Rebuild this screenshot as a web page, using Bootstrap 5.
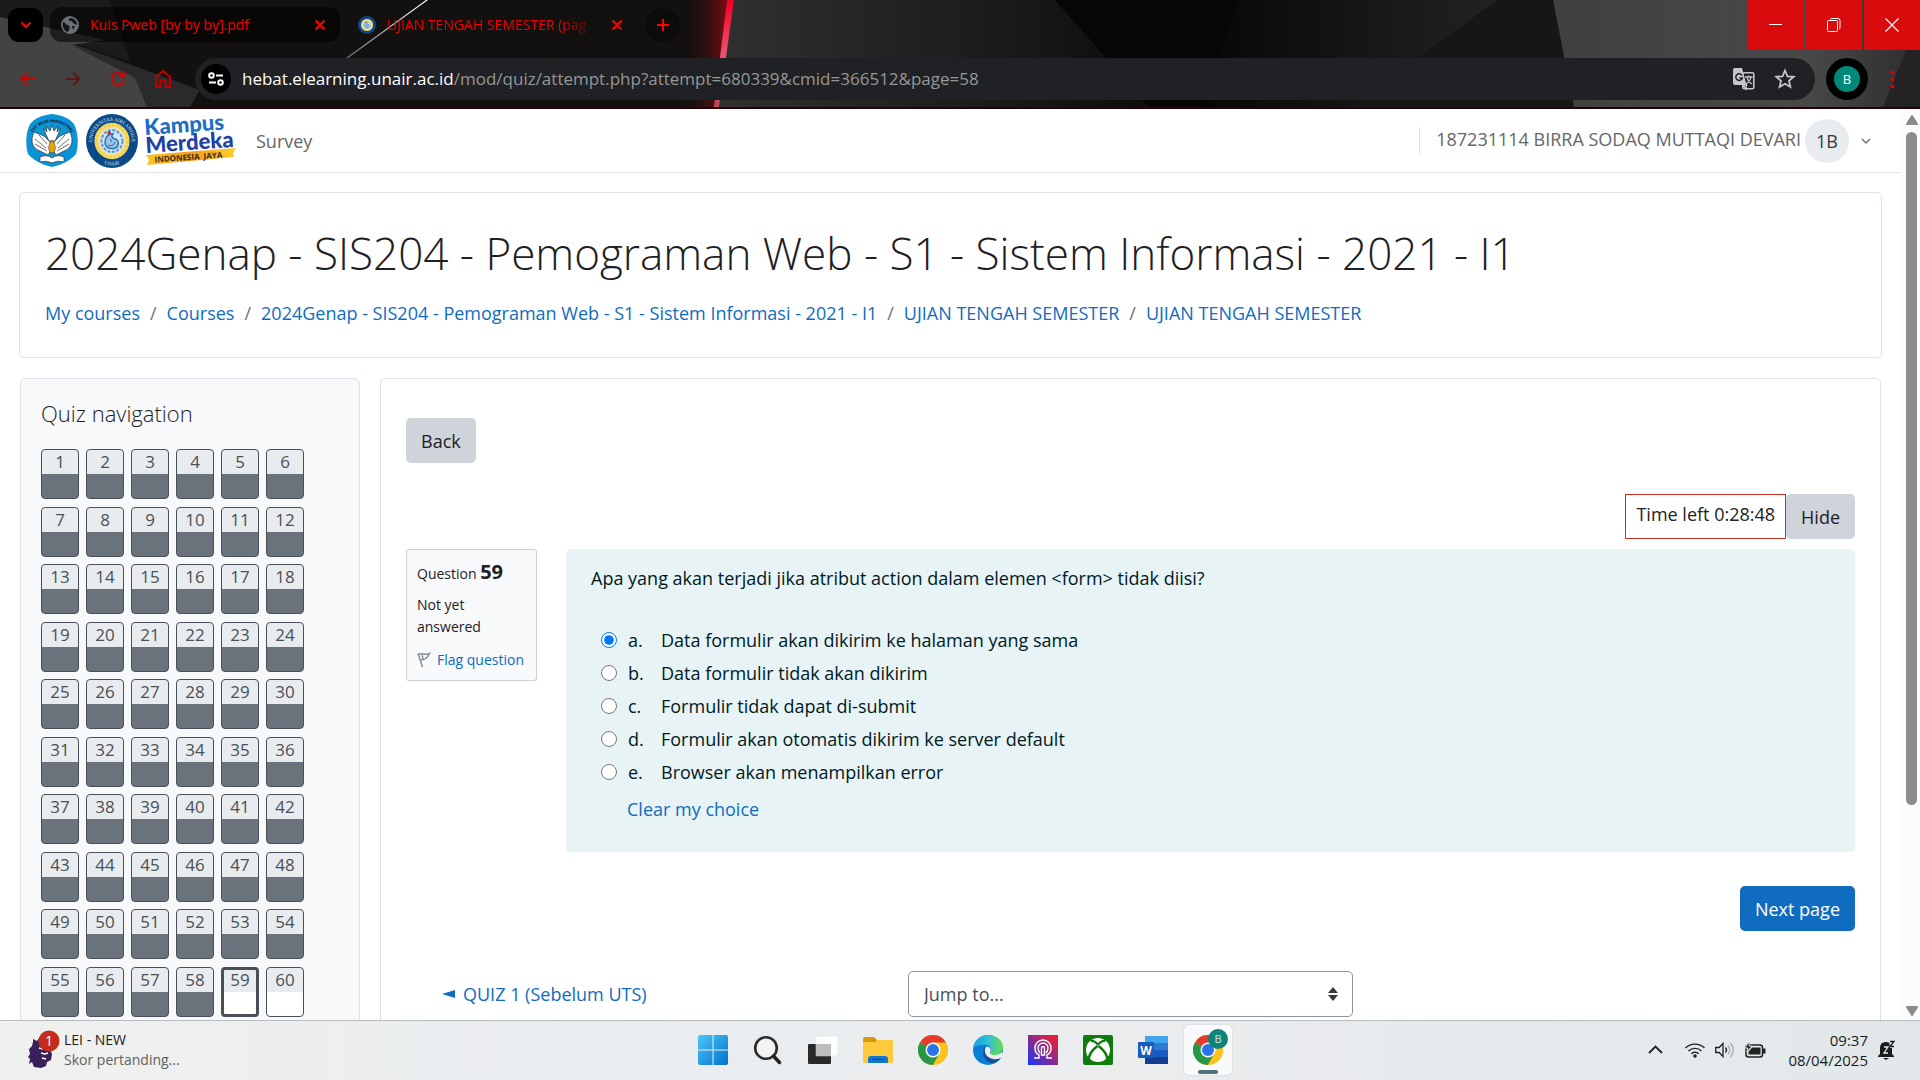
<!DOCTYPE html>
<html lang="id">
<head>
<meta charset="utf-8">
<meta name="viewport" content="width=device-width, initial-scale=1">
<title>UJIAN TENGAH SEMESTER (page 59 of 60)</title>
<link href="https://cdn.jsdelivr.net/npm/bootstrap@5.3.0/dist/css/bootstrap.min.css" rel="stylesheet">
<style>
  :root { --link: #0f6cbf; --line: #dee2e6; --red: #f00000; }
  body { font-family: "Open Sans", "Noto Sans", sans-serif; font-size: 18px; line-height: 28px; color: #1d2125; background: #fff; }
  a { color: var(--link); text-decoration: none; }
  svg { display: block; flex: none; overflow: visible; }
  button { font-family: inherit; }

  /* browser frame */
  .frame-top { position: relative; background: #12110f; border-bottom: 2px solid #2b0000; overflow: hidden; }
  .wallpaper { position: absolute; inset: 0; width: 100%; height: 100%; }
  .frame-row { position: relative; }
  .plain-btn { background: none; border: 0; padding: 0; display: flex; align-items: center; justify-content: center; flex: none; }
  .tab-strip { height: 58px; padding-left: 8px; }
  .tab-search { width: 35px; height: 34px; border-radius: 11px; background: #000; margin-top: 8px; }
  .tab-item { width: 290px; height: 35px; margin: 7px 0 0 7px; padding: 0 12px 0 11px; border-radius: 12px; color: var(--red); font-size: 14px; line-height: 20px; }
  .tab-idle { background: rgba(0, 0, 0, .55); }
  .tab-text { flex: 1; min-width: 0; margin-left: 11px; white-space: nowrap; }
  .tab-fade { -webkit-mask-image: linear-gradient(90deg, #000 78%, transparent 95%); mask-image: linear-gradient(90deg, #000 78%, transparent 95%); }
  .tab-new { width: 35px; height: 34px; border-radius: 50%; background: #0b0b0a; margin: 8px 0 0 8px; }
  .win-btns { gap: 2px; }
  .win-btn { width: 56px; height: 50px; background: #d90b0d; }
  .tool-row { height: 49px; padding: 0 25px 0 20px; }
  .tool-btn { width: 45px; height: 42px; justify-content: flex-start; }
  .address { height: 42px; border-radius: 21px; background: #202124; padding: 0 20px 0 6px; margin-left: -5px; }
  .site-dot { width: 30px; height: 30px; border-radius: 50%; background: #000; }
  .address-input { font-size: 17px; line-height: 24px; color: #969798; margin-left: 11px; }
  .address-host { color: #fff; }
  .me-ring { width: 42px; height: 42px; border-radius: 50%; background: #000; margin-left: 11px; }
  .me-dot { width: 26px; height: 26px; border-radius: 50%; background: #00897b; color: #fff; font-size: 13px; line-height: 26px; text-align: center; }
  .kebab-btn { height: 42px; margin-left: 22px; }

  /* page */
  .site-nav { height: 64px; border-bottom: 1px solid var(--line); padding: 0 29px 0 26px; }
  .site-nav a, .user-name { color: #646668; }
  .user-zone { border-left: 1px solid var(--line); height: 27px; padding-left: 16px; }
  .initials { width: 44px; height: 44px; border-radius: 50%; background: #e9ecef; color: #343a40; line-height: 44px; text-align: center; }
  .panel { border: 1px solid var(--line); border-radius: 5px; background: #fff; }
  .course-head { margin: 19px 18px 20px 19px; padding: 32px 25px 30px; }
  .course-title { font-size: 44px; font-weight: 300; line-height: 56px; margin: 0 0 18px; }
  .crumbs { --bs-breadcrumb-item-padding-x: 10px; --bs-breadcrumb-divider-color: #6a737b; }
  .lower { padding: 0 19px 0 20px; gap: 20px; }
  .quiz-side { width: 340px; flex: none; background: #f8f9fa; padding: 20px; }
  .side-title { font-size: 22px; font-weight: 300; line-height: 28px; margin: 0 0 22px; }
  .q-grid { display: grid; grid-template-columns: repeat(6, 38px); gap: 7px; align-content: space-between; min-height: 568px; }
  .q-box { height: 50px; border: 1px solid #495057; border-radius: 4px; overflow: hidden; text-align: center; font-size: 17px; line-height: 24px; color: #495057; background: linear-gradient(#e9ecef 24px, #6a737b 24px); }
  .q-open { background: linear-gradient(#e9ecef 24px, #fff 24px); }
  .q-here { border-width: 3px; line-height: 20px; background: linear-gradient(#e9ecef 22px, #fff 22px); }
  .quiz-main { padding: 39px 25px 40px; }
  .grey-btn, .blue-btn { border: 0; border-radius: 5px; padding: 9px 15px 8px; line-height: 28px; background: #ced4da; color: #1d2125; }
  .blue-btn { background: var(--link); color: #fff; }
  .timer-row { margin-top: 31px; margin-bottom: 10px; }
  .timer-box { border: 1px solid #ca3120; padding: 5px 10px 10px; }
  .q-info { width: 131px; flex: none; border: 1px solid #cad0d7; border-radius: 3px; background: #f8f9fa; padding: 8px 10px 9px; font-size: 14px; line-height: 22px; }
  .q-label { font-size: 14px; line-height: 28px; margin: 0 0 6px; font-weight: 400; white-space: nowrap; }
  .q-label b { font-size: 20px; }
  .flag-link { margin-top: 11px; gap: 6px; white-space: nowrap; }
  .q-body { flex: 1; margin-left: 29px; border-radius: 5px; background: #e7f3f5; color: #001a1e; padding: 15px 25px 29px; }
  .q-text { margin-bottom: 34px; }
  .answers { gap: 5px; padding-left: 10px; }
  .answers input { width: 16px; height: 16px; margin: 0 11px 0 0; }
  .answers .letter { width: 33px; }
  .clear-link { margin: 9px 0 0 36px; }
  .next-row { margin: 34px 0 40px; }
  .prev-col { padding-left: 36px; }
  .jump-col { padding: 0 19px; }
  .jump-box { position: relative; }
  .jump-select { appearance: none; width: 100%; height: 46px; border: 1px solid #8f959e; border-radius: 5px; padding: 0 15px; color: #495057; background: #fff; }
  .jump-mark { position: absolute; right: 15px; top: 16px; pointer-events: none; }
  .scroll-track { width: 20px; flex: none; background: #fcfcfc; padding: 6px 4px 4px 6px; }
  .scroll-thumb { width: 11px; height: 673px; border-radius: 6px; background: #8b8b8b; margin-top: 7px; }

  /* taskbar */
  .task-bar { display: grid; grid-template-columns: 1fr auto 1fr; align-items: center; height: 60px; padding-bottom: 2px; flex: none; border-top: 1px solid #b9bcbe; background: linear-gradient(90deg, #f0f0ee, #e9edf1 35%, #ecedee 50%, #e7eaed 75%, #e2e8e9); font-size: 14px; line-height: 20px; color: #1b1b1b; }
  .task-bar .sub { color: #5e5f60; }
  .widget { padding-left: 27px; gap: 4px; }
  .app-row { gap: 7px; }
  .app-btn { width: 48px; height: 50px; border-radius: 5px; }
  .app-on { background: #f9fafb; outline: 1px solid #dfe2e4; position: relative; }
  .app-on::after { content: ""; position: absolute; left: 14px; bottom: 1px; width: 20px; height: 4px; border-radius: 2px; background: #4f7480; }
  .tray { padding-right: 25px; gap: 10px; font-size: 15px; }
</style>
</head>
<body>
<svg width="0" height="0" class="position-absolute" aria-hidden="true">
  <defs>
    <symbol id="chrome" viewBox="0 0 30 30">
      <circle cx="15" cy="15" r="15" fill="#fbbc05"/>
      <path d="M15 15 2 7.500A15 15 0 0 1 28 7.500Z" fill="#e33b2e"/>
      <path d="M2 7.500A15 15 0 0 0 15 30L21.500 18.700 15 15Z" fill="#279847"/>
      <path d="M15 7.500H28A15 15 0 0 1 15 30L21.500 18.700Z" fill="#fcc31e"/>
      <circle cx="15" cy="15" r="7.500" fill="#fff"/><circle cx="15" cy="15" r="6" fill="#2a72ea"/>
    </symbol>
    <symbol id="unair" viewBox="0 0 52 52">
      <circle cx="26" cy="26" r="26" fill="#0b4a86"/>
      <circle cx="26" cy="26" r="17.500" fill="#f4e28a"/>
      <circle cx="26" cy="26" r="15.500" fill="none" stroke="#f7cf3c" stroke-width="3" stroke-dasharray="3 1"/>
      <circle cx="26" cy="26" r="12.500" fill="#d3e4f2"/>
      <circle cx="26" cy="26" r="10.500" fill="none" stroke="#5b97cc" stroke-width="2" stroke-dasharray="3 1.500"/>
      <path d="M19 27c0-5 4-8 8-8-2 3-1 4 2 5 3 1 4 3 3 6s-5 4-8 3c-3 0-5-3-5-6Z" fill="#9cc4e4" stroke="#2873b8" stroke-width="1.500"/>
      <path d="M22 30c3 1 6 0 7-3M24 24l2 3" stroke="#2873b8" fill="none"/>
      <path d="m21 18 3-2 1 3-3 1Z" fill="#d22"/>
    </symbol>
  </defs>
</svg>

<div class="vh-100 d-flex flex-column overflow-hidden">
  <header class="frame-top flex-shrink-0">
    <svg class="wallpaper" viewBox="0 0 1920 107" preserveAspectRatio="none" aria-hidden="true">
      <defs>
        <linearGradient id="ga" x2="1"><stop stop-color="#303030"/><stop offset=".6" stop-color="#1c1c1c"/><stop offset="1" stop-color="#0c0c0c"/></linearGradient>
        <linearGradient id="gb" x2="1"><stop stop-color="#404040"/><stop offset=".7" stop-color="#484848"/><stop offset="1" stop-color="#2d2d2d"/></linearGradient>
        <linearGradient id="gc" x2="1"><stop stop-color="#12110f" stop-opacity="0"/><stop offset="1" stop-color="#7a0c16"/></linearGradient>
        <linearGradient id="gd" x2="0" y2="1"><stop stop-color="#f00020"/><stop offset=".5" stop-color="#f05070"/><stop offset="1" stop-color="#c44458"/></linearGradient>
        <linearGradient id="ge" x2="1"><stop stop-color="#070707"/><stop offset="1" stop-color="#222"/></linearGradient>
        <linearGradient id="gf" x2="0" y2="1"><stop stop-color="#fff"/><stop offset="1" stop-color="#777"/></linearGradient>
      </defs>
      <path d="M0 0H110L130 62 0 17Z" fill="#1b1b1b"/>
      <path d="M0 17 200 90 190 107H0Z" fill="#2a2a2a"/>
      <path d="M0 17 105 40 72 45 135 78 147 107H0Z" fill="#434343"/>
      <path d="M690 0H727L715 107H680Z" fill="url(#gc)"/>
      <path d="M733 0H1055L1150 107H719Z" fill="url(#ga)"/>
      <path d="M1055 0H1280L1240 107H1150Z" fill="#070604"/>
      <path d="M1240 0H1498L1350 107H1200Z" fill="url(#ge)"/>
      <path d="M1498 0H1553L1574 107H1350Z" fill="#161616"/>
      <path d="M1553 0H1920V107H1574Z" fill="url(#gb)"/>
      <path d="M1906 50H1920V107H1883Z" fill="#232323"/>
      <path d="M727 0h7L719 107h-5Z" fill="url(#gd)"/>
      <path d="M426 0h2L348 58h-2Z" fill="url(#gf)"/>
    </svg>
    <div class="frame-row tab-strip d-flex align-items-start">
      <button class="plain-btn tab-search" aria-label="Cari tab"><svg width="12" height="8" viewBox="0 0 12 8"><path d="m1.500 1.500 4.500 4.500 4.500-4.500" fill="none" stroke="red" stroke-width="2"/></svg></button>
      <div class="tab-item tab-idle d-flex align-items-center">
        <svg width="18" height="18" viewBox="0 0 18 18"><circle cx="9" cy="9" r="9" fill="#6b7075"/><path d="M2 6c3 0 2 3 5 3 2 1 2 3 1 5l-1 2C3 15 1 11 2 6ZM9 2c-2 2-2 3 1 3 3 1 2 3 4 3l2 1c0-4-3-7-7-7ZM11 10h3l-2 4Z" fill="#151515"/></svg>
        <span class="tab-text">Kuis Pweb [by by by].pdf</span>
        <button class="plain-btn" aria-label="Tutup tab"><svg width="16" height="16" viewBox="0 0 16 16"><path d="m3.500 3.500 9 9m0-9-9 9" stroke="red" stroke-width="2"/></svg></button>
      </div>
      <div class="tab-item d-flex align-items-center">
        <svg width="18" height="18"><use href="#unair"/></svg>
        <span class="tab-text tab-fade">UJIAN TENGAH SEMESTER (pag</span>
        <button class="plain-btn" aria-label="Tutup tab"><svg width="16" height="16" viewBox="0 0 16 16"><path d="m3.500 3.500 9 9m0-9-9 9" stroke="red" stroke-width="2"/></svg></button>
      </div>
      <button class="plain-btn tab-new" aria-label="Tab baru"><svg width="14" height="14" viewBox="0 0 14 14"><path d="M7 1v12M1 7h12" stroke="red" stroke-width="2"/></svg></button>
      <div class="win-btns d-flex ms-auto">
        <button class="plain-btn win-btn" aria-label="Kecilkan"><svg width="14" height="14" viewBox="0 0 14 14"><path d="M0 6.500h13" stroke="#fff"/></svg></button>
        <button class="plain-btn win-btn" aria-label="Pulihkan"><svg width="14" height="14" viewBox="0 0 14 14"><path d="M3.500 1.500q0-1 1-1H11q2 0 2 2V10q0 1-1 1" fill="none" stroke="#fff"/><rect x=".5" y="2.500" width="10" height="11" rx="1" fill="none" stroke="#fff"/></svg></button>
        <button class="plain-btn win-btn" aria-label="Tutup"><svg width="14" height="14" viewBox="0 0 14 14"><path d="m.5.5 13 13m0-13-13 13" stroke="#fff" stroke-width="1.200"/></svg></button>
      </div>
    </div>
    <div class="frame-row tool-row d-flex align-items-start">
      <button class="plain-btn tool-btn" aria-label="Kembali"><svg width="16" height="16" viewBox="0 0 16 16"><path d="M15 8H2m6-6.500L1.500 8 8 14.500" fill="none" stroke="#d00000" stroke-width="2"/></svg></button>
      <button class="plain-btn tool-btn" aria-label="Maju"><svg width="16" height="16" viewBox="0 0 16 16"><path d="M1 8h13M8 1.500 14.500 8 8 14.500" fill="none" stroke="#5c1818" stroke-width="2"/></svg></button>
      <button class="plain-btn tool-btn" aria-label="Muat ulang"><svg width="16" height="16" viewBox="0 0 16 16"><path d="M13.500 5A6.300 6.300 0 1 0 14.200 9.500M14 .5V6H8.500" fill="none" stroke="#d00000" stroke-width="2"/></svg></button>
      <button class="plain-btn tool-btn" aria-label="Beranda"><svg width="16" height="18" viewBox="0 0 16 18"><path d="M1 7 8 1l7 6v10h-4.500v-6.500h-5V17H1Z" fill="none" stroke="#c00000" stroke-width="2"/></svg></button>
      <div class="address flex-grow-1 d-flex align-items-center">
        <button class="plain-btn site-dot" aria-label="Info situs"><svg width="16" height="14" viewBox="0 0 16 14"><g fill="none" stroke="#fff" stroke-width="2"><circle cx="3.500" cy="3.500" r="2.300"/><path d="M8 3.500h7M1 10.500h7"/><circle cx="12.500" cy="10.500" r="2.300"/></g></svg></button>
        <a class="address-input flex-grow-1" href="#"><span class="address-host">hebat.elearning.unair.ac.id</span>/mod/quiz/attempt.php?attempt=680339&amp;cmid=366512&amp;page=58</a>
        <button class="plain-btn me-3" aria-label="Terjemahkan"><svg width="22" height="22" viewBox="0 0 22 22"><rect x="9.800" y="4.800" width="11" height="16" rx="1.500" fill="none" stroke="#c4c6c8" stroke-width="1.600"/><path d="M2 0h7l4.500 17H2q-2 0-2-2V2q0-2 2-2Z" fill="#c4c6c8"/><path d="M9 7.500A3.300 3.300 0 1 0 9.300 10H6.500" fill="none" stroke="#202124" stroke-width="1.500"/><path d="M12 9h7.500M15.500 7.500V9m2.500 0c-.5 3-3 5.500-5 7m1-6c1 3 3 5 5 6M10 17l3 4 .5-4Z" fill="none" stroke="#c4c6c8" stroke-width="1.300"/></svg></button>
        <button class="plain-btn ms-1" aria-label="Tandai halaman"><svg width="20" height="20" viewBox="0 0 20 20"><path d="m10 1.500 2.500 5.800 6.200.5-4.700 4.100 1.400 6.100L10 14.800 4.600 18 6 11.900 1.300 7.800l6.200-.5Z" fill="none" stroke="#c4c6c8" stroke-width="1.800"/></svg></button>
      </div>
      <button class="plain-btn me-ring" aria-label="Profil"><span class="me-dot">B</span></button>
      <button class="plain-btn kebab-btn" aria-label="Menu"><svg width="5" height="19" viewBox="0 0 5 19"><g fill="#d80000"><circle cx="2.500" cy="2.500" r="2"/><circle cx="2.500" cy="9.500" r="2"/><circle cx="2.500" cy="16.500" r="2"/></g></svg></button>
    </div>
  </header>

  <div class="d-flex flex-grow-1 overflow-hidden">
    <div class="flex-grow-1 overflow-hidden">
      <nav class="site-nav d-flex align-items-center">
        <a href="#" class="d-flex align-items-center gap-2" aria-label="Beranda situs">
          <svg width="52" height="54" viewBox="0 0 52 54">
            <path d="M26 0C36 1 43 4 48 10c4 8 5 20 2 30-5 6-14 11-24 13C16 51 7 46 2 40-1 30 0 18 4 10 9 4 16 1 26 0Z" fill="#0a93d6"/>
            <path id="arc1" d="M6 21C11 4 41 4 46 21" fill="none"/>
            <text font-size="4" font-weight="700" fill="#111"><textPath href="#arc1" startOffset="50%" text-anchor="middle">TUT WURI HANDAYANI</textPath></text>
            <g fill="#fff" stroke="#333" stroke-width=".7">
              <path d="M23 27 17 14l4 4-1-6 4 5 2-6 2 6 4-5-1 6 4-4-6 13Z"/>
              <path d="M24 28 18 22 8 18C4 27 6 34 14 37l8 4 3-5Zm4 0 6-6 10-4c4 9 2 16-6 19l-8 4-3-5Z"/>
              <path d="M9 25l11 9M9 30l12 7M43 25l-11 9M43 30l-12 7M13 21l8 9M39 21l-8 9"/>
              <path d="M14 43q7-3 12 1 5-4 12-1v5q-7-2-12 1-5-3-12-1Z"/>
            </g>
            <path d="M26 26c5 6 4 12 0 13-4-1-5-7 0-13Z" fill="#e8a30c" stroke="#333" stroke-width=".5"/>
          </svg>
          <svg width="52" height="54" viewBox="0 0 52 52" preserveAspectRatio="none">
            <use href="#unair" width="52" height="52"/>
            <path id="arc2" d="M7 33A20 20 0 1 1 45 33" fill="none"/><path id="arc3" d="M9 42A23 23 0 0 0 43 42" fill="none"/>
            <text font-size="5" font-family="Liberation Serif" fill="#dfe9f2"><textPath href="#arc2" startOffset="50%" text-anchor="middle">UNIVERSITAS AIRLANGGA</textPath></text>
            <text font-size="5" font-family="Liberation Serif" fill="#dfe9f2"><textPath href="#arc3" startOffset="50%" text-anchor="middle">UNAIR</textPath></text>
          </svg>
          <svg width="90" height="50" viewBox="0 0 90 50">
            <defs><linearGradient id="gj" x2="1"><stop stop-color="#fbc623"/><stop offset=".5" stop-color="#f59b20"/><stop offset="1" stop-color="#fbd02a"/></linearGradient></defs>
            <path d="M0 39 90 32 87 37 88 41 1 49 3 44Z" fill="url(#gj)"/>
            <g transform="rotate(-4 0 36)">
              <text x="0" y="19" font-family="Lato" font-weight="900" font-size="22" fill="#1c6fc4">Kampus</text>
              <text x="0" y="37" font-family="Lato" font-weight="900" font-size="22" fill="#2040a4">Merdeka</text>
              <text x="8" y="47" font-family="Open Sans" font-weight="700" font-size="8" fill="#3b2a10">INDONESIA &#160;JAYA</text>
            </g>
          </svg>
        </a>
        <a href="#" class="ms-3 ps-1">Survey</a>
        <div class="ms-auto d-flex align-items-center user-zone">
          <a href="#" class="user-name pb-1">187231114 BIRRA SODAQ MUTTAQI DEVARI</a>
          <span class="initials ms-1">1B</span>
          <button class="plain-btn ms-2 ps-1" aria-label="Menu pengguna"><svg width="10" height="8" viewBox="0 0 10 8"><path d="m1 2 4 4 4-4" fill="none" stroke="#6a737b" stroke-width="1.500"/></svg></button>
        </div>
      </nav>

      <section class="panel course-head">
        <h1 class="course-title">2024Genap - SIS204 - Pemograman Web - S1 - Sistem Informasi - 2021 - I1</h1>
        <ol class="breadcrumb crumbs mb-0">
          <li class="breadcrumb-item"><a href="#">My courses</a></li>
          <li class="breadcrumb-item"><a href="#">Courses</a></li>
          <li class="breadcrumb-item"><a href="#">2024Genap - SIS204 - Pemograman Web - S1 - Sistem Informasi - 2021 - I1</a></li>
          <li class="breadcrumb-item"><a href="#">UJIAN TENGAH SEMESTER</a></li>
          <li class="breadcrumb-item"><a href="#">UJIAN TENGAH SEMESTER</a></li>
        </ol>
      </section>

      <div class="lower d-flex">
        <aside class="panel quiz-side">
          <h2 class="side-title">Quiz navigation</h2>
          <div class="q-grid" id="qGrid"></div>
        </aside>
        <main class="panel quiz-main flex-grow-1">
          <button class="grey-btn d-block">Back</button>
          <div class="timer-row d-flex justify-content-end">
            <div class="timer-box">Time left 0:28:48</div>
            <button class="grey-btn">Hide</button>
          </div>
          <form>
            <div class="d-flex align-items-start">
              <div class="q-info">
                <h3 class="q-label">Question <b>59</b></h3>
                <div>Not yet answered</div>
                <a href="#" class="flag-link d-flex align-items-center"><svg width="14" height="16" viewBox="0 0 14 16"><path d="M1 1.500 5.500 15M1.500 2.500C5 0 8 4 12.500 1.500 11 5 8 8 3.500 8M5 3l1 4" fill="none" stroke="#8a8f94" stroke-width="1.500"/></svg>Flag question</a>
              </div>
              <div class="q-body">
                <div class="q-text">Apa yang akan terjadi jika atribut action dalam elemen &lt;form&gt; tidak diisi?</div>
                <div class="answers d-flex flex-column">
                  <div class="d-flex align-items-center"><input type="radio" name="ans" id="a1" checked><label class="d-flex" for="a1"><span class="letter">a.</span>Data formulir akan dikirim ke halaman yang sama</label></div>
                  <div class="d-flex align-items-center"><input type="radio" name="ans" id="a2"><label class="d-flex" for="a2"><span class="letter">b.</span>Data formulir tidak akan dikirim</label></div>
                  <div class="d-flex align-items-center"><input type="radio" name="ans" id="a3"><label class="d-flex" for="a3"><span class="letter">c.</span>Formulir tidak dapat di-submit</label></div>
                  <div class="d-flex align-items-center"><input type="radio" name="ans" id="a4"><label class="d-flex" for="a4"><span class="letter">d.</span>Formulir akan otomatis dikirim ke server default</label></div>
                  <div class="d-flex align-items-center"><input type="radio" name="ans" id="a5"><label class="d-flex" for="a5"><span class="letter">e.</span>Browser akan menampilkan error</label></div>
                </div>
                <div class="clear-link"><a href="#">Clear my choice</a></div>
              </div>
            </div>
            <div class="next-row d-flex justify-content-end"><button type="submit" class="blue-btn">Next page</button></div>
          </form>
          <div class="row g-0 align-items-center">
            <div class="col-4 prev-col"><a href="#" class="d-flex align-items-center"><svg class="me-2" width="13" height="8" viewBox="0 0 13 8"><path d="M0 4 13 0v8Z" fill="#0f6cbf"/></svg>QUIZ 1 (Sebelum UTS)</a></div>
            <div class="col-4 jump-col"><div class="jump-box">
              <select class="jump-select" aria-label="Jump to..."><option>Jump to...</option></select>
              <svg class="jump-mark" width="10" height="14" viewBox="0 0 10 14"><path d="m5 0 5 6H0Zm0 14L0 8h10Z" fill="#343a40"/></svg>
            </div></div>
          </div>
        </main>
      </div>
    </div>
    <div class="scroll-track d-flex flex-column">
      <svg width="12" height="10" viewBox="0 0 12 10"><path d="M6 1 11 9H1Z" fill="#8b8b8b" stroke="#8b8b8b" stroke-width="2" stroke-linejoin="round"/></svg>
      <div class="scroll-thumb"></div>
      <svg class="mt-auto" width="12" height="10" viewBox="0 0 12 10"><path d="M6 9 1 1h10Z" fill="#8b8b8b" stroke="#8b8b8b" stroke-width="2" stroke-linejoin="round"/></svg>
    </div>
  </div>

  <footer class="task-bar">
    <div class="widget d-flex align-items-center">
      <svg width="33" height="40" viewBox="0 0 33 40">
        <path d="m6 9 4 2 2-3 2 4 6 1 3 6 2 5-1 6-4 2-1 4-5 2-7-1-2-5-3 2 1-5-2-2 2-3-1-5 3-3 1-4Z" fill="#38205a"/>
        <path d="m14 23 4 1 3-1m-6 5 4 1M12 18l4 1" stroke="#fff" stroke-width="1.500" fill="none"/>
        <circle cx="22" cy="11" r="10.500" fill="#c52c1c"/><text x="22" y="16" font-size="14" text-anchor="middle" fill="#fff">1</text>
      </svg>
      <div><div>LEI - NEW</div><div class="sub">Skor pertanding...</div></div>
    </div>
    <div class="app-row d-flex">
      <button class="plain-btn app-btn" aria-label="Mulai"><svg width="30" height="30" viewBox="0 0 30 30"><defs><linearGradient id="gw" x2="1" y2="1"><stop stop-color="#4cc8f8"/><stop offset="1" stop-color="#0070d0"/></linearGradient></defs><path d="M2 0h12.500v14.500H0V2q0-2 2-2ZM15.500 0H28q2 0 2 2v12.500H15.500ZM0 15.500h14.500V30H2q-2 0-2-2ZM15.500 15.500H30V28q0 2-2 2H15.500Z" fill="url(#gw)"/></svg></button>
      <button class="plain-btn app-btn" aria-label="Cari"><svg width="28" height="30" viewBox="0 0 28 30"><circle cx="12" cy="13" r="10.800" fill="#fff" fill-opacity=".35" stroke="#2b2b2b" stroke-width="2.600"/><path d="m19.500 21 6 6.500" stroke="#222" stroke-width="3.500" stroke-linecap="round"/></svg></button>
      <button class="plain-btn app-btn" aria-label="Tampilan tugas"><svg width="30" height="30" viewBox="0 0 30 30"><rect y="9" width="23" height="20" rx="1" fill="#292929"/><rect x="8" y="1" width="22" height="20" rx="1" fill="#fff" fill-opacity=".85" stroke="#ddd" stroke-width=".5"/><path d="M8 9h15v12H8Z" fill="#bdbdbd"/></svg></button>
      <button class="plain-btn app-btn" aria-label="File Explorer"><svg width="30" height="28" viewBox="0 0 30 28"><path d="M0 3q0-2 2-2h9l3 3v5H0Z" fill="#d99a0a"/><path d="M0 6h12l3-2h15v22q0 1-1 1H0Z" fill="#ffca3e"/><path d="M5 27v-4q0-3 3-3h14q3 0 3 3v4Z" fill="#0f78d0"/><path d="M9 23.500h12" stroke="#0a4a85" stroke-width="1.200"/></svg></button>
      <button class="plain-btn app-btn" aria-label="Chrome"><svg width="30" height="30"><use href="#chrome"/></svg></button>
      <button class="plain-btn app-btn" aria-label="Edge"><svg width="30" height="30" viewBox="0 0 30 30"><defs><linearGradient id="gm" x2="1"><stop stop-color="#1ba0e0"/><stop offset=".5" stop-color="#2fc0d8"/><stop offset="1" stop-color="#6cdc4c"/></linearGradient></defs><circle cx="15" cy="15" r="15" fill="#0c7ed6"/><path d="M0 14C1 5 8 0 15 0c9 0 15 6 15 12 0 6-5 8-9 8-3 0-4-1-4-3 3-3 0-7-4-7C6 9 1 12 0 14Z" fill="url(#gm)"/><path d="M12 12c-4 6-1 14 6 16 4 0 8-2 10-5-6 2-15 1-16-11Z" fill="#10509c"/><path d="M13 12c-3 4 0 11 7 12 4 1 8-1 10-2l2-5-4 1c-3 2-8 2-10 1-2-1-1-2-.5-3 1-3-2-5-4.500-4Z" fill="#eaecef"/><path d="M30 12c0 6-5 8-9 8-3 0-4-1-4-3 5 1 10-1 13-5Z" fill="#58d66e"/></svg></button>
      <button class="plain-btn app-btn" aria-label="Asisten"><svg width="30" height="30" viewBox="0 0 30 30"><defs><linearGradient id="gv" y1="1" x2="1" y2="0"><stop stop-color="#1238ff"/><stop offset=".5" stop-color="#8b2a8e"/><stop offset="1" stop-color="#ff1c24"/></linearGradient></defs><path d="M0 0h30v30H0Z" fill="url(#gv)"/><g fill="none" stroke="#fff" stroke-width="1.400"><path d="M6 23h5v-3q-4-2-4-7a8 8 0 0 1 16 0q0 5-4 7v3h5"/><path d="M12 18q-2-2-2-5a5 5 0 0 1 10 0q0 3-2 5"/><path d="M13.500 20v-7a1.500 1.500 0 0 1 3 0v7Z"/></g></svg></button>
      <button class="plain-btn app-btn" aria-label="Xbox"><svg width="30" height="30" viewBox="0 0 30 30"><rect width="30" height="30" rx="2" fill="#107c10"/><circle cx="15" cy="15" r="12" fill="#fff"/><path d="M7 5c3-1 6 1 8 3 2-2 5-4 8-3l-1 2c-3 0-5 2-7 4-2-2-4-4-7-4Z" fill="#107c10"/><path d="M14.500 11C9 15 6 20 5.500 24.500M15.500 11c5.500 4 8.500 9 9 13.500" fill="none" stroke="#107c10" stroke-width="2.600"/></svg></button>
      <button class="plain-btn app-btn" aria-label="Word"><svg width="30" height="30" viewBox="0 0 30 30"><path d="M7 1h23v7H7Z" fill="#41a5ee"/><path d="M7 8h23v7H7Z" fill="#2b7cd3"/><path d="M7 15h23v7H7Z" fill="#185abd"/><path d="M7 22h23v7H7Z" fill="#103f91"/><rect y="7" width="16" height="16" rx="1" fill="#185abd"/><text x="8" y="19.500" font-size="12" font-weight="700" text-anchor="middle" fill="#fff">W</text></svg></button>
      <button class="plain-btn app-btn app-on" aria-label="Chrome, profil B"><svg width="40" height="40" viewBox="0 0 40 40"><use href="#chrome" x="5" y="5" width="30" height="30"/><circle cx="30" cy="9" r="10" fill="#0b8577"/><text x="30" y="13" font-size="11" text-anchor="middle" fill="#cfe8e4">B</text></svg></button>
    </div>
    <div class="tray d-flex align-items-center justify-content-end">
      <svg class="me-2" width="15" height="9" viewBox="0 0 15 9"><path d="m1 8 6.500-6.500L14 8" fill="none" stroke="#222" stroke-width="1.800"/></svg>
      <svg class="ms-1" width="20" height="16" viewBox="0 0 20 16"><g fill="none" stroke="#222" stroke-width="1.400"><path d="M.5 6a13.500 13.500 0 0 1 19 0M3.500 9a9.300 9.300 0 0 1 13 0M6.300 11.800a5.200 5.200 0 0 1 7.400 0"/></g><circle cx="10" cy="14" r="1.800" fill="#222"/></svg>
      <svg width="20" height="16" viewBox="0 0 20 16"><path d="M.7 5.500h3.500L8 1.500v13l-3.800-4H.7Z" fill="none" stroke="#222" stroke-width="1.300"/><path d="M10.500 5.500q2 2.500 0 5" fill="none" stroke="#222" stroke-width="1.300"/><path d="M13 3.500q3.500 4.500 0 9M15.500 1q5.500 7 0 14" fill="none" stroke="#aaa" stroke-width="1.300"/></svg>
      <svg width="21" height="17" viewBox="0 0 21 17"><rect x="1" y="4" width="16.500" height="12" rx="2.500" fill="none" stroke="#222" stroke-width="1.500"/><path d="M7 6.500h8.500v7H3.500V11Z" fill="#222"/><path d="M18 7.500h2.500v5H18Z" fill="#222"/><path d="M4.500 0 0 7h3l-1 4 5-6H4Z" fill="#222" stroke="#e4e9ea" stroke-width=".8"/></svg>
      <div class="text-end ms-2 ps-1"><div>09:37</div><div>08/04/2025</div></div>
      <svg width="17" height="20" viewBox="0 0 17 20"><path d="M2 14V8q0-6 6-6 6 0 6 6v6l2 2v1H0v-1Z" fill="#1b1b1b"/><path d="M5 18h6l-3 2Z" fill="#1b1b1b"/><path d="M6 7h4l-4 6h4" fill="none" stroke="#e4e9ea" stroke-width="1.300"/><path d="M11 0h6v8h-5Z" fill="#e4e9ea"/><path d="M12 1.500h4l-4 5h4" fill="none" stroke="#1b1b1b" stroke-width="1.300"/></svg>
    </div>
  </footer>
</div>

<script src="https://cdn.jsdelivr.net/npm/bootstrap@5.3.0/dist/js/bootstrap.bundle.min.js"></script>
<script>
  // question 59 is the current one, question 60 has no answer yet
  const grid = document.getElementById('qGrid');
  for (let n = 1; n <= 60; n++) {
    const box = document.createElement('a');
    box.href = '#';
    box.className = 'q-box' + (n === 59 ? ' q-here' : n === 60 ? ' q-open' : '');
    box.textContent = n;
    grid.append(box);
  }
</script>
</body>
</html>
